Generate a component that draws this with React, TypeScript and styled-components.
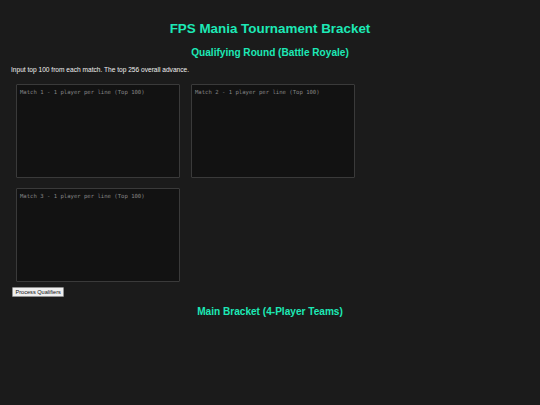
import styled, { createGlobalStyle } from "styled-components";

const GlobalStyle = createGlobalStyle`
  html, body {
    margin: 0;
    padding: 0;
    background: #1b1b1b;
  }

  body {
    font-family: "Liberation Sans", Arial, sans-serif;
    color: #f0f0f0;
  }
`;

const Page = styled.div`
  padding: 14px 11px 20px;
  min-height: 405px;
  box-sizing: border-box;
`;

const Title = styled.h1`
  margin: 7px 0 0;
  font-size: 13.4px;
  line-height: 16px;
  text-align: center;
  color: #1de9b6;
`;

const SectionTitle = styled.h2<{ $top?: number }>`
  margin: ${({ $top }) => $top ?? 10}px 0 0;
  font-size: 10.1px;
  line-height: 12px;
  text-align: center;
  color: #1de9b6;
`;

const Hint = styled.p`
  margin: 7px 0 0;
  font-size: 6.6px;
  line-height: 8px;
`;

const MatchGrid = styled.div`
  display: grid;
  grid-template-columns: repeat(2, 164px);
  column-gap: 11px;
  row-gap: 10px;
  margin: 10px 0 0 5px;
`;

const MatchInput = styled.textarea`
  box-sizing: border-box;
  width: 164px;
  height: 94px;
  margin: 0;
  padding: 4px 3px;
  resize: none;
  background: #121212;
  border: 1px solid #3a3a3a;
  border-radius: 1px;
  color: #ddd;
  font-family: "DejaVu Sans Mono", "Liberation Mono", monospace;
  font-size: 5.6px;
  line-height: 7px;
  outline: none;

  &::placeholder {
    color: #858585;
  }
`;

const ProcessButton = styled.button`
  display: block;
  margin: 5px 0 0 1px;
  padding: 1px 2.5px;
  height: 10px;
  background: #efefef;
  border: 1px solid #8f8f8f;
  border-radius: 1px;
  color: #111;
  font-family: "Liberation Sans", Arial, sans-serif;
  font-size: 5.6px;
  line-height: 6px;
`;

const matches = [1, 2, 3];

export default function App() {
  return (
    <>
      <GlobalStyle />
      <Page>
        <Title>FPS Mania Tournament Bracket</Title>
        <SectionTitle>Qualifying Round (Battle Royale)</SectionTitle>
        <Hint>Input top 100 from each match. The top 256 overall advance.</Hint>
        <MatchGrid>
          {matches.map((n) => (
            <MatchInput
              key={n}
              placeholder={`Match ${n} - 1 player per line (Top 100)`}
            />
          ))}
        </MatchGrid>
        <ProcessButton>Process Qualifiers</ProcessButton>
        <SectionTitle $top={9}>Main Bracket (4-Player Teams)</SectionTitle>
      </Page>
    </>
  );
}
